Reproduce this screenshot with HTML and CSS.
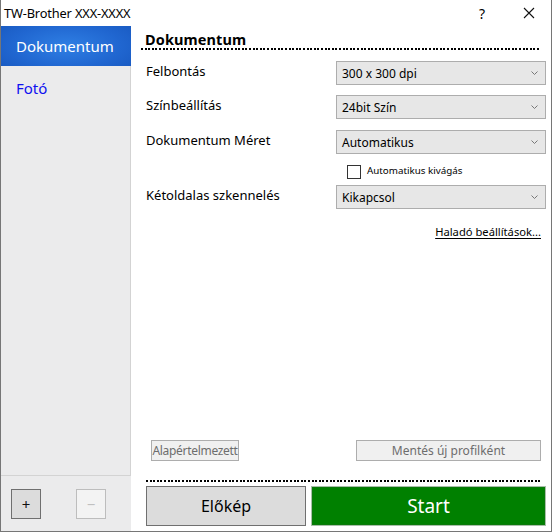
FILE: index.html
```html
<!DOCTYPE html>
<html>
<head>
<meta charset="utf-8">
<link rel="stylesheet" href="styles.css">
</head>
<body>
<div class="window">
  <div class="titlebar">
    <span class="title">TW-Brother XXX-XXXX</span>
    <span class="help">?</span>
    <span class="close"><svg width="12" height="12" viewBox="0 0 12 12"><path d="M1 1L11 11M11 1L1 11" stroke="#111" stroke-width="1.1" fill="none"/></svg></span>
  </div>
  <div class="content">
    <div class="sidebar">
      <div class="list">
        <div class="item selected">Dokumentum</div>
        <div class="item second">Fotó</div>
      </div>
      <div class="tools">
        <div class="tool">+</div>
        <div class="tool disabled">&minus;</div>
      </div>
    </div>
    <div class="main">
      <div class="heading">Dokumentum</div>
      <div class="dots"></div>
      <div class="row r1">
        <div class="label">Felbontás</div>
        <div class="select">300 x 300 dpi<svg class="chev" width="7" height="5" viewBox="0 0 7 5"><path d="M0.5 0.5L3.5 3.5L6.5 0.5" stroke="#777" stroke-width="1" fill="none"/></svg></div>
      </div>
      <div class="row r2">
        <div class="label">Színbeállítás</div>
        <div class="select">24bit Szín<svg class="chev" width="7" height="5" viewBox="0 0 7 5"><path d="M0.5 0.5L3.5 3.5L6.5 0.5" stroke="#777" stroke-width="1" fill="none"/></svg></div>
      </div>
      <div class="row r3">
        <div class="label">Dokumentum Méret</div>
        <div class="select">Automatikus<svg class="chev" width="7" height="5" viewBox="0 0 7 5"><path d="M0.5 0.5L3.5 3.5L6.5 0.5" stroke="#777" stroke-width="1" fill="none"/></svg></div>
      </div>
      <div class="check">
        <span class="box"></span>
        <span class="checklabel">Automatikus kivágás</span>
      </div>
      <div class="row r4">
        <div class="label">Kétoldalas szkennelés</div>
        <div class="select">Kikapcsol<svg class="chev" width="7" height="5" viewBox="0 0 7 5"><path d="M0.5 0.5L3.5 3.5L6.5 0.5" stroke="#777" stroke-width="1" fill="none"/></svg></div>
      </div>
      <div class="linkrow"><span class="link">Haladó beállítások...</span></div>
      <div class="spacer"></div>
      <div class="profilerow">
        <div class="btn-dis small">Alapértelmezett</div>
        <div class="btn-dis wide">Mentés új profilként</div>
      </div>
      <div class="dots bottomdots"></div>
      <div class="actions">
        <div class="preview">Előkép</div>
        <div class="start">Start</div>
      </div>
    </div>
  </div>
</div>
</body>
</html>
```
FILE: styles.css
```css
html, body {
  margin: 0;
  padding: 0;
  background: #ffffff;
}
body {
  font-family: "Noto Sans", "Open Sans", sans-serif;
  color: #000;
}
.window {
  width: 552px;
  height: 532px;
  box-sizing: border-box;
  border-left: 1px solid #767676;
  border-right: 1px solid #767676;
  border-bottom: 1px solid #767676;
  display: flex;
  flex-direction: column;
  background: #fff;
}
.titlebar {
  height: 26px;
  display: flex;
  align-items: center;
  font-size: 12.8px;
}
.title {
  margin-left: 3px;
  flex: 1;
  letter-spacing: -0.15px;
}
.help {
  width: 14px;
  margin-right: 30px;
  font-size: 14px;
}
.close {
  width: 12px;
  margin-right: 16px;
  display: flex;
}
.content {
  flex: 1;
  display: flex;
  min-height: 0;
}
.sidebar {
  width: 130px;
  background: #ebebec;
  display: flex;
  flex-direction: column;
}
.list {
  flex: 1;
  border-right: 1px solid #d3d3d3;
  border-bottom: 1px solid #d3d3d3;
}
.item {
  height: 40px;
  line-height: 40px;
  padding-left: 15px;
  font-size: 15px;
  color: #1010f0;
}
.item.second {
  margin-top: 2px;
}
.item.selected {
  color: #fff;
  margin-right: -1px;
  background: radial-gradient(ellipse 70% 90% at 50% 50%, #2f7fe4 0%, #2066d0 60%, #1858bf 100%);
}
.tools {
  height: 55px;
  display: flex;
  align-items: flex-start;
  padding-top: 13px;
  padding-left: 10px;
  box-sizing: border-box;
  gap: 35px;
}
.tool {
  width: 28px;
  height: 28px;
  border: 1px solid #6f6f6f;
  background: #dcdcdc;
  display: flex;
  align-items: center;
  justify-content: center;
  font-size: 15px;
  color: #111;
}
.tool.disabled {
  border-color: #bdbdbd;
  background: #f3f3f3;
  color: #c0c0c0;
}
.main {
  flex: 1;
  display: flex;
  flex-direction: column;
  background: #fff;
}
.heading {
  font-weight: bold;
  font-size: 14.5px;
  margin-top: 4px;
  margin-left: 14px;
  height: 18px;
  line-height: 18px;
  letter-spacing: 0.1px;
}
.dots {
  height: 2px;
  margin-left: 10px;
  margin-right: 12px;
  background: repeating-linear-gradient(to right, #000 0 2px, transparent 2px 3.6px);
}
.row {
  display: flex;
  align-items: center;
  padding-left: 15px;
  padding-right: 5px;
}
.r1 { margin-top: 11px; }
.r2 { margin-top: 10px; }
.r3 { margin-top: 11px; }
.r4 { margin-top: 6px; }
.label {
  flex: 1;
  font-size: 13px;
  margin-top: -5px;
}
.select {
  width: 203px;
  height: 22px;
  border: 1px solid #adadad;
  background: #e7e7e7;
  display: flex;
  align-items: center;
  padding-left: 5px;
  font-size: 12px;
  position: relative;
}
.chev {
  position: absolute;
  right: 7px;
  top: 9px;
}
.check {
  display: flex;
  align-items: center;
  margin-top: 11px;
  padding-left: 216px;
  height: 14px;
}
.box {
  width: 12px;
  height: 12px;
  border: 1px solid #333;
  background: #fff;
}
.checklabel {
  font-size: 9.8px;
  margin-left: 6px;
  margin-top: -3px;
}
.linkrow {
  display: flex;
  justify-content: flex-end;
  padding-right: 10px;
  margin-top: 15px;
}
.link {
  font-size: 11.2px;
  text-decoration: underline;
  text-underline-offset: 2px;
}
.spacer {
  flex: 1;
}
.profilerow {
  display: flex;
  justify-content: space-between;
  padding-left: 20px;
  padding-right: 10px;
}
.btn-dis {
  height: 19px;
  border: 1px solid #adadad;
  background: #f0f0f0;
  color: #6d6d6d;
  font-size: 12px;
  display: flex;
  align-items: center;
  justify-content: center;
}
.btn-dis.small {
  width: 86px;
  letter-spacing: -0.3px;
}
.btn-dis.wide {
  width: 183px;
}
.bottomdots {
  margin-top: 19px;
  margin-left: 15px;
  margin-right: 10px;
}
.actions {
  display: flex;
  margin-top: 4px;
  padding-left: 15px;
  padding-right: 5px;
  gap: 5px;
  margin-bottom: 5px;
}
.preview {
  width: 158px;
  height: 38px;
  border: 1px solid #707070;
  background: #dcdcdc;
  display: flex;
  align-items: center;
  justify-content: center;
  font-size: 16px;
}
.start {
  flex: 1;
  height: 36px;
  border: 1px solid #a9bfa9;
  box-shadow: inset 0 0 0 1px #0a7a0a;
  background: #008000;
  color: #fff;
  display: flex;
  align-items: center;
  justify-content: center;
  font-size: 19px;
  padding: 1px 0;
}
```
